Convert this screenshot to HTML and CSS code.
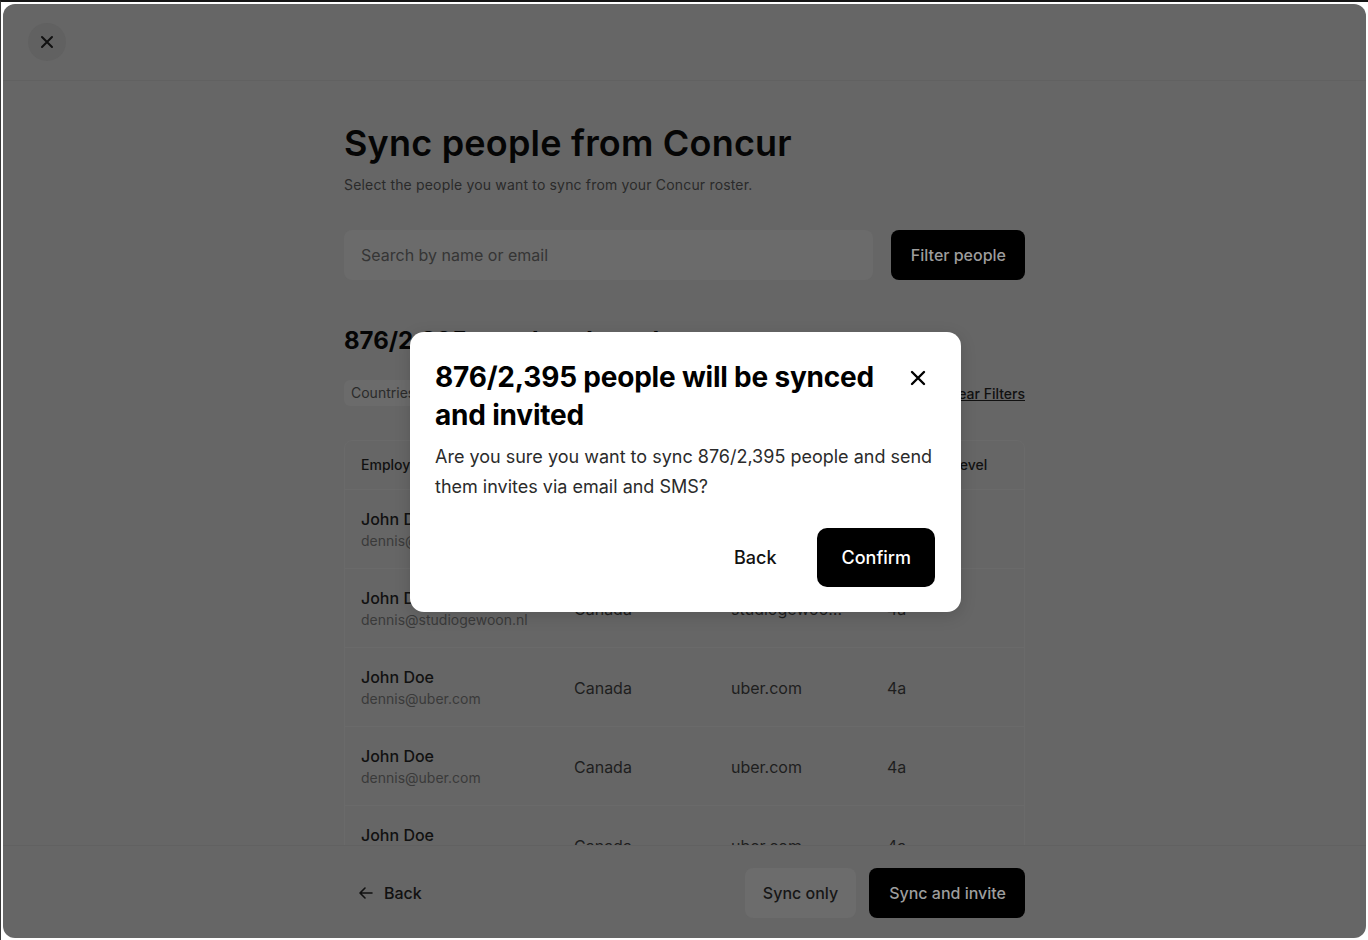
FILE: index.html
```html
<!DOCTYPE html>
<html lang="en">
<head>
<meta charset="utf-8">
<title>Sync people from Concur</title>
<link rel="stylesheet" href="styles.css">
</head>
<body>
<div class="window">
  <header class="topbar">
    <button class="close-circle" aria-label="Close">
      <svg width="14" height="14" viewBox="0 0 14 14"><path d="M2 2L12 12M12 2L2 12" stroke="#111" stroke-width="2" stroke-linecap="round"/></svg>
    </button>
  </header>

  <main class="main">
    <div class="column">
      <h1 class="title">Sync people from Concur</h1>
      <p class="subtitle">Select the people you want to sync from your Concur roster.</p>

      <div class="search-row">
        <div class="search">Search by name or email</div>
        <button class="btn btn-dark filter">Filter people</button>
      </div>

      <h2 class="count">876/2,395 people selected</h2>

      <div class="chips-row">
        <span class="chip">Countries: All</span>
        <a class="clear-link">Clear Filters</a>
      </div>

      <div class="table">
        <div class="row head">
          <div>Employee</div>
          <div>Country</div>
          <div>Domain</div>
          <div>Employee level</div>
        </div>
        <div class="row">
          <div class="person"><div class="name">John Doe</div><div class="email">dennis@studiogewoon.nl</div></div>
          <div class="cell">Canada</div>
          <div class="cell"><span class="trunc">studiogewoon.nl</span></div>
          <div class="cell">4a</div>
        </div>
        <div class="row">
          <div class="person"><div class="name">John Doe</div><div class="email">dennis@studiogewoon.nl</div></div>
          <div class="cell">Canada</div>
          <div class="cell"><span class="trunc">studiogewoon.nl</span></div>
          <div class="cell">4a</div>
        </div>
        <div class="row">
          <div class="person"><div class="name">John Doe</div><div class="email">dennis@uber.com</div></div>
          <div class="cell">Canada</div>
          <div class="cell">uber.com</div>
          <div class="cell">4a</div>
        </div>
        <div class="row">
          <div class="person"><div class="name">John Doe</div><div class="email">dennis@uber.com</div></div>
          <div class="cell">Canada</div>
          <div class="cell">uber.com</div>
          <div class="cell">4a</div>
        </div>
        <div class="row">
          <div class="person"><div class="name">John Doe</div><div class="email">dennis@uber.com</div></div>
          <div class="cell">Canada</div>
          <div class="cell">uber.com</div>
          <div class="cell">4a</div>
        </div>
      </div>
    </div>
  </main>

  <footer class="footer">
    <div class="footer-inner">
      <button class="btn btn-ghost back">
        <svg width="16" height="16" viewBox="0 0 16 16"><path d="M14 8H2.5M7 3L2 8l5 5" fill="none" stroke="#111" stroke-width="1.6" stroke-linecap="round" stroke-linejoin="round"/></svg>
        <span>Back</span>
      </button>
      <div class="footer-actions">
        <button class="btn btn-light sync-only">Sync only</button>
        <button class="btn btn-dark sync-invite">Sync and invite</button>
      </div>
    </div>
  </footer>

  <div class="dialog" role="dialog">
    <div class="dialog-head">
      <h3 class="dialog-title">876/2,395 people will be synced and invited</h3>
      <button class="dialog-close" aria-label="Close">
        <svg width="18" height="18" viewBox="0 0 18 18"><path d="M3 3L15 15M15 3L3 15" stroke="#000" stroke-width="2.4" stroke-linecap="round"/></svg>
      </button>
    </div>
    <p class="dialog-text">Are you sure you want to sync 876/2,395 people and send them invites via email and SMS?</p>
    <div class="dialog-actions">
      <button class="dbtn dbtn-ghost">Back</button>
      <button class="dbtn dbtn-dark">Confirm</button>
    </div>
  </div>
</div>
</body>
</html>
```

FILE: styles.css
```css
* { box-sizing: border-box; }

html, body { height: 100%; }

body {
  margin: 0;
  background: #ffffff;
  border-top: 2px solid #161616;
  border-left: 1px solid #3a3a3a;
  font-family: Inter, "Liberation Sans", sans-serif;
  color: #111;
  overflow: hidden;
}

.window {
  position: relative;
  margin: 2px 2px 2px 2px;
  height: 934px;
  background: #666666;
  border-radius: 12px;
  overflow: hidden;
  display: flex;
  flex-direction: column;
}

button { font-family: inherit; border: 0; cursor: pointer; }

.topbar {
  height: 77px;
  flex: none;
  padding: 19px 0 0 25px;
  border-bottom: 1px solid #616161;
}

.close-circle {
  width: 38px;
  height: 38px;
  border-radius: 50%;
  background: #616161;
  display: flex;
  align-items: center;
  justify-content: center;
  padding: 0;
}

.main {
  flex: 1;
  overflow: hidden;
  min-height: 0;
}

.column {
  width: 681px;
  margin: 0 auto;
  padding-top: 40px;
}

.title {
  margin: 0;
  font-size: 36px;
  line-height: 44px;
  font-weight: 600;
  letter-spacing: 0.2px;
  color: #050505;
}

.subtitle {
  margin: 10px 0 0;
  font-size: 14px;
  line-height: 20px;
  letter-spacing: 0.17px;
  color: #2a2a2a;
}

.search-row {
  margin-top: 35px;
  display: flex;
  gap: 18px;
}

.search {
  flex: 1;
  height: 50px;
  border-radius: 8px;
  background: #6b6b6b;
  padding: 0 17px;
  display: flex;
  align-items: center;
  font-size: 16px;
  color: #353535;
}

.btn {
  height: 50px;
  border-radius: 8px;
  font-size: 16px;
  font-weight: 500;
  padding: 0 17px;
  display: inline-flex;
  align-items: center;
  gap: 10px;
}

.filter { padding: 0 19px 0 20px; }
.sync-only { padding: 0 18px; }
.sync-invite { padding: 0 19px 0 20px; }

.btn-dark { background: #000; color: #9d9d9d; }
.btn-light { background: #6c6c6c; color: #161616; }
.btn-ghost { background: transparent; color: #111; }

.count {
  margin: 45px 0 0;
  font-size: 24px;
  line-height: 32px;
  font-weight: 700;
  color: #050505;
}

.chips-row {
  margin-top: 23px;
  display: flex;
  justify-content: space-between;
  align-items: center;
}

.chip {
  height: 26px;
  padding: 0 7px;
  border-radius: 6px;
  background: #6b6b6b;
  font-size: 14px;
  line-height: 26px;
  color: #2a2a2a;
}

.clear-link {
  font-size: 14px;
  font-weight: 500;
  color: #111;
  text-decoration: underline;
}

.table {
  margin-top: 34px;
  border: 1px solid #6a6a6a;
  border-radius: 8px;
}

.row {
  display: grid;
  grid-template-columns: 213px 157px 156px 1fr;
  padding: 17px 16px 17px 16px;
  border-bottom: 1px solid #6a6a6a;
  align-items: center;
}

.row.head {
  padding: 14px 16px;
  font-size: 14px;
  line-height: 20px;
  font-weight: 500;
  color: #111;
}

.name {
  font-size: 16px;
  line-height: 24px;
  font-weight: 500;
  color: #111;
}

.email {
  font-size: 14px;
  line-height: 20px;
  color: #3a3a3a;
}

.cell {
  font-size: 16px;
  line-height: 24px;
  color: #1e1e1e;
  padding-top: 2px;
}

.trunc {
  display: block;
  width: 112px;
  white-space: nowrap;
  overflow: hidden;
  text-overflow: ellipsis;
}

.footer {
  flex: none;
  height: 93px;
  border-top: 1px solid #616161;
  padding-top: 22px;
}

.footer-inner {
  width: 681px;
  margin: 0 auto;
  display: flex;
  justify-content: space-between;
}

.back { padding: 0 14px; }

.footer-actions { display: flex; gap: 13px; }

.dialog {
  position: absolute;
  left: 407px;
  top: 328px;
  width: 551px;
  background: #fff;
  border-radius: 14px;
  padding: 26px 26px 25px 25px;
  box-shadow: 0 4px 16px rgba(0,0,0,0.15);
}

.dialog-head {
  display: flex;
  justify-content: space-between;
  align-items: flex-start;
  gap: 20px;
}

.dialog-title {
  margin: 0;
  font-size: 28px;
  line-height: 38px;
  font-weight: 700;
  letter-spacing: -0.2px;
  color: #000;
}

.dialog-close {
  background: transparent;
  padding: 0;
  width: 24px;
  height: 24px;
  margin-top: 8px;
  margin-right: 8px;
  display: flex;
  align-items: center;
  justify-content: center;
}

.dialog-text {
  margin: 8px 0 0;
  font-size: 18px;
  line-height: 30px;
  color: #2b2b2b;
}

.dialog-actions {
  margin-top: 26px;
  display: flex;
  justify-content: flex-end;
  gap: 20px;
}

.dbtn {
  height: 59px;
  border-radius: 10px;
  font-size: 18px;
  font-weight: 500;
  padding: 0 24px 0 25px;
}

.dbtn-ghost { background: transparent; color: #111; padding: 0 20px; }
.dbtn-dark { background: #000; color: #fff; }
```
